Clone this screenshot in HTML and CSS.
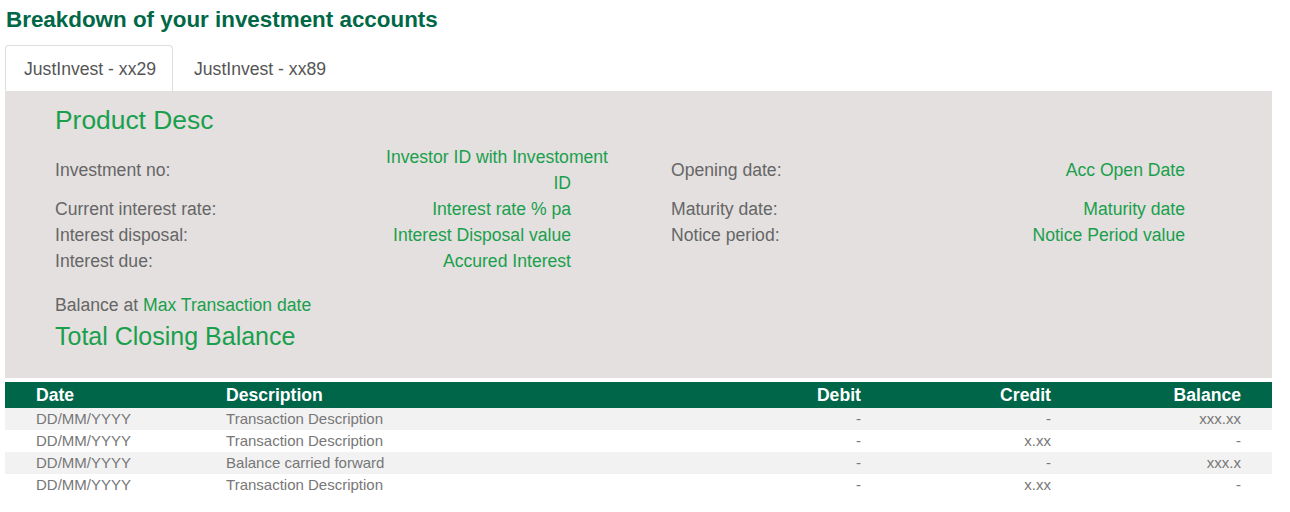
FILE: index.html
```html
<!DOCTYPE html>
<html>
<head>
<meta charset="utf-8">
<link rel="stylesheet" href="styles.css">
</head>
<body>
<div class="page">
  <h1 class="title">Breakdown of your investment accounts</h1>
  <div class="tabs">
    <div class="tab active">JustInvest - xx29</div>
    <div class="tab">JustInvest - xx89</div>
  </div>
  <div class="panel">
    <div class="product">Product Desc</div>
    <div class="details">
      <div class="label">Investment no:</div>
      <div class="value"><span class="overflow-line">Investor ID with Investoment</span>ID</div>
      <div class="label label2">Opening date:</div>
      <div class="value">Acc Open Date</div>

      <div class="label">Current interest rate:</div>
      <div class="value">Interest rate % pa</div>
      <div class="label label2">Maturity date:</div>
      <div class="value">Maturity date</div>

      <div class="label">Interest disposal:</div>
      <div class="value">Interest Disposal value</div>
      <div class="label label2">Notice period:</div>
      <div class="value">Notice Period value</div>

      <div class="label">Interest due:</div>
      <div class="value">Accured Interest</div>
      <div></div>
      <div></div>
    </div>
    <div class="balance-line">Balance at <span class="green">Max Transaction date</span></div>
    <div class="total">Total Closing Balance</div>
  </div>
  <table class="tx">
    <colgroup>
      <col class="w15">
      <col class="w40">
      <col class="w15">
      <col class="w15">
      <col class="w15">
    </colgroup>
    <thead>
      <tr>
        <th>Date</th>
        <th>Description</th>
        <th class="num">Debit</th>
        <th class="num">Credit</th>
        <th class="num">Balance</th>
      </tr>
    </thead>
    <tbody>
      <tr><td>DD/MM/YYYY</td><td>Transaction Description</td><td class="num">-</td><td class="num">-</td><td class="num">xxx.xx</td></tr>
      <tr><td>DD/MM/YYYY</td><td>Transaction Description</td><td class="num">-</td><td class="num">x.xx</td><td class="num">-</td></tr>
      <tr><td>DD/MM/YYYY</td><td>Balance carried forward</td><td class="num">-</td><td class="num">-</td><td class="num">xxx.x</td></tr>
      <tr><td>DD/MM/YYYY</td><td>Transaction Description</td><td class="num">-</td><td class="num">x.xx</td><td class="num">-</td></tr>
    </tbody>
  </table>
</div>
</body>
</html>
```
FILE: styles.css
```css
* { box-sizing: border-box; }
html, body { margin: 0; padding: 0; background: #fff; }
body {
  font-family: "Liberation Sans", Arial, sans-serif;
  color: #666;
}
.page {
  padding: 0 18px 0 5px;
}
.title {
  margin: 0;
  padding: 6px 0 0 1px;
  height: 45px;
  font-size: 22.4px;
  font-weight: bold;
  color: #006747;
  line-height: 28px;
}
.tabs {
  display: flex;
  height: 46px;
}
.tab {
  font-size: 17.6px;
  color: #555;
  padding: 0 18px;
  line-height: 46px;
  border: 1px solid transparent;
  border-bottom: none;
  border-radius: 4px 4px 0 0;
  margin-right: 2px;
}
.tab.active {
  background: #fff;
  border-color: #ddd;
  padding: 0 16px 0 18px;
}
.panel {
  background: #e3e0df;
  padding: 14px 0 0 50px;
  height: 287px;
}
.product {
  font-size: 26.4px;
  color: #1a9f4c;
  line-height: 30px;
  margin-bottom: 9px;
}
.details {
  display: grid;
  grid-template-columns: 220px 296px 300px 314px;
  grid-template-rows: 52px 26px 26px 26px;
  align-items: center;
  font-size: 17.6px;
  line-height: 26px;
}
.label { color: #666; white-space: nowrap; }
.label2 { padding-left: 100px; }
.value {
  color: #1a9f4c;
  text-align: right;
  white-space: nowrap;
}
.overflow-line {
  display: block;
  margin-right: -37px;
}
.balance-line {
  margin-top: 18px;
  font-size: 17.6px;
  line-height: 26px;
  color: #666;
}
.green { color: #1a9f4c; }
.total {
  font-size: 25px;
  line-height: 36px;
  color: #1a9f4c;
}
.tx {
  width: 100%;
  border-collapse: collapse;
  margin-top: 4px;
  table-layout: fixed;
}
.w15 { width: 15%; }
.w40 { width: 40%; }
.tx th, .tx td {
  padding: 0 31px;
  text-align: left;
  white-space: nowrap;
}
.tx th {
  background: #00664a;
  color: #fff;
  font-size: 17.6px;
  font-weight: bold;
  height: 26px;
  line-height: 26px;
}
.tx td {
  font-size: 15px;
  color: #777;
  height: 22px;
  line-height: 22px;
}
.tx tbody tr:nth-child(odd) td { background: #f2f2f2; }
.tx .num { text-align: right; }
```
